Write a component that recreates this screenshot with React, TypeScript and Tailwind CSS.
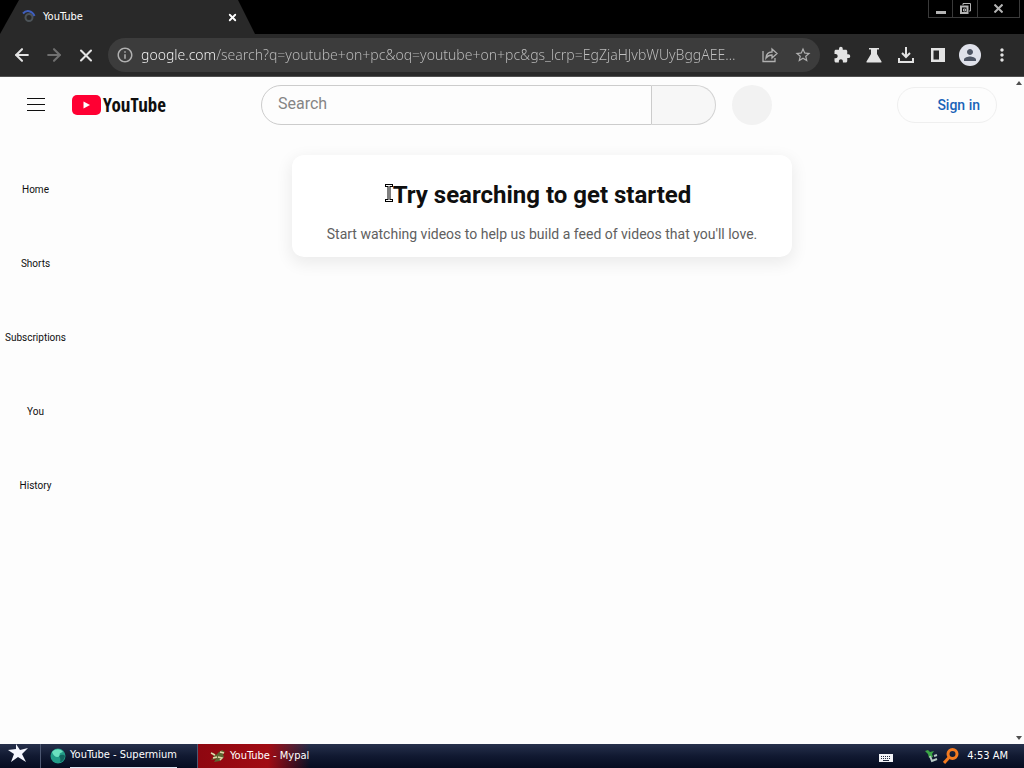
import { useState } from "react";
import { ArrowLeft, ArrowRight, X } from "lucide-react";
import { MdExtension, MdInfoOutline, MdMoreVert, MdPerson, MdStarBorder } from "react-icons/md";

const GUIDE_ITEMS = ["Home", "Shorts", "Subscriptions", "You", "History"];

const START_URL = "google.com/search?q=youtube+on+pc&oq=youtube+on+pc&gs_lcrp=EgZjaHJvbWUyBggAEE…";

function LoadingIcon() {
  return (
    <svg width="14" height="14" viewBox="0 0 14 14" fill="none" strokeWidth="2">
      <circle cx="7" cy="7.5" r="3.5" stroke="#4c5358" />
      <path d="M1 3.500C4 0 10 0 12.500 6" stroke="#3f5fbf" />
    </svg>
  );
}

function WindowControls() {
  return (
    <div className="flex h-[18px] border-b border-l border-[#3a3a3a] text-[#b4b4b4]">
      <button aria-label="Minimize" className="flex w-6 items-center justify-center border-r border-[#3a3a3a]">
        <svg width="10" height="12" viewBox="0 0 10 12"><path d="M0 8h10v3H0z" fill="currentColor" /></svg>
      </button>
      <button aria-label="Restore" className="flex w-[25px] items-center justify-center border-r border-[#3a3a3a]">
        <svg width="11" height="11" viewBox="0 0 11 11" fill="none" stroke="currentColor">
          <path d="M3 2V.5h7.500V8H9" />
          <path d="M1 3.500h6.500V10H1z" strokeWidth="2" />
          <path d="M3.500 6h2v2h-2z" />
        </svg>
      </button>
      <button aria-label="Close window" className="flex w-[42px] items-center justify-center border-r border-[#3a3a3a]">
        <svg width="9" height="9" viewBox="0 0 9 9" fill="none" stroke="currentColor" strokeWidth="2"><path d="M.5.5l8 8M8.500.5l-8 8" /></svg>
      </button>
    </div>
  );
}

function TabStrip() {
  return (
    <div className="flex h-[34px] items-start justify-between bg-black pr-1">
      <div className="flex h-full w-64 items-center bg-[#292929] pr-4 pl-[22px] text-white [clip-path:polygon(19px_0,238px_0,255px_100%,0_100%)]">
        <LoadingIcon />
        <span className="ml-[7px] flex-1 font-['DejaVu_Sans_Condensed','DejaVu_Sans',sans-serif] text-[11px]">YouTube</span>
        <button aria-label="Close tab" className="flex h-4 w-4 items-center justify-center">
          <X size={11} strokeWidth={4} />
        </button>
      </div>
      <WindowControls />
    </div>
  );
}

function Toolbar() {
  const [url, setUrl] = useState(START_URL);

  return (
    <div className="flex h-[43px] items-center border-b border-[#505050] bg-[#292929] pr-3 text-[#e3e3e3]">
      <button aria-label="Back" className="ml-3 flex h-5 w-5 items-center justify-center"><ArrowLeft size={20} strokeWidth={2.5} /></button>
      <button aria-label="Forward" className="ml-3 flex h-5 w-5 items-center justify-center text-[#6f6f6f]"><ArrowRight size={20} strokeWidth={2.5} /></button>
      <button aria-label="Stop" className="ml-3 flex h-5 w-5 items-center justify-center"><X size={21} strokeWidth={2.5} /></button>
      <div className="ml-3 flex h-[34px] flex-1 items-center rounded-full bg-[#3c3c3c] px-2 text-[#b0b0b0]">
        <button aria-label="Site information" className="flex h-[18px] w-[18px] items-center justify-center"><MdInfoOutline size={18} /></button>
        <input
          aria-label="Address"
          value={url}
          onChange={(e) => setUrl(e.target.value)}
          className="ml-[7px] min-w-0 flex-1 bg-[linear-gradient(90deg,#ffffff_75px,#c0c0c0_75px)] bg-clip-text font-['Noto_Sans',sans-serif] text-sm font-light text-transparent outline-none"
        />
        <button aria-label="Share" className="flex h-4 w-4 items-center justify-center">
          <svg width="16" height="16" viewBox="0 0 16 16" fill="none" stroke="currentColor" strokeWidth="1.3">
            <path d="M1 4v10.500h12V11" />
            <path d="M4 11c.3-4 2.500-6 6-6V2l5 4.500-5 4.500V8C7.500 8 5.500 9 4 11z" />
          </svg>
        </button>
        <button aria-label="Bookmark" className="ml-4 flex h-[18px] w-[18px] items-center justify-center"><MdStarBorder size={18} /></button>
      </div>
      <button aria-label="Extensions" className="ml-3 flex h-5 w-5 items-center justify-center"><MdExtension size={18} /></button>
      <button aria-label="Labs" className="ml-3 flex h-5 w-5 items-center justify-center">
        <svg width="16" height="16" viewBox="0 0 16 16" fill="currentColor"><path d="M3 1h10v1.500h-2V7l4.500 7.500Q16 15.500 15 15.500H1Q0 15.500.5 14.500L5 7V2.500H3z" /></svg>
      </button>
      <button aria-label="Downloads" className="ml-3 flex h-5 w-5 items-center justify-center">
        <svg width="18" height="18" viewBox="0 0 18 18" fill="none" stroke="currentColor" strokeWidth="2">
          <path d="M9 1v9M5 7l4 4 4-4M2 12v4h14v-4" />
        </svg>
      </button>
      <button aria-label="Side panel" className="ml-3 flex h-5 w-5 items-center justify-center">
        <svg width="14" height="14" viewBox="0 0 14 14" fill="currentColor"><path fillRule="evenodd" d="M0 0h14v14H0zM2.500 2.500v9H8v-9z" /></svg>
      </button>
      <button aria-label="Profile" className="ml-[11px] flex h-[22px] w-[22px] items-center justify-center rounded-full bg-[#dfe1ea] text-[#4d5463]"><MdPerson size={18} /></button>
      <button aria-label="Browser menu" className="ml-[11px] flex h-5 w-5 items-center justify-center"><MdMoreVert size={20} /></button>
    </div>
  );
}

function Masthead() {
  const [query, setQuery] = useState("");

  return (
    <header className="flex h-14 items-center px-4">
      <div className="flex w-[245px] shrink-0 items-center">
        <button aria-label="Guide" className="flex h-10 w-10 items-center justify-center">
          <svg width="18" height="14" viewBox="0 0 18 14" stroke="#0f0f0f"><path d="M0 .5h18M0 6.500h18M0 12.500h18" /></svg>
        </button>
        <a href="#home" className="ml-4 flex items-center gap-0.5">
          <svg width="29" height="20" viewBox="0 0 29 20">
            <rect width="29" height="20" rx="5" fill="#ff0033" />
            <path d="M11.500 6.500v7l6.500-3.500z" fill="#fff" />
          </svg>
          <span className="font-['Open_Sans_Condensed','Noto_Sans_Condensed','Roboto_Condensed',Roboto,sans-serif] text-[19px] leading-6 font-bold text-[#0f0f0f]">YouTube</span>
        </a>
      </div>
      <form className="flex flex-1 items-center" onSubmit={(e) => e.preventDefault()}>
        <input
          aria-label="Search"
          placeholder="Search"
          value={query}
          onChange={(e) => setQuery(e.target.value)}
          className="h-10 min-w-0 flex-1 rounded-l-full border border-[#ccc] bg-[#fdfdfd] pr-1 pb-1 pl-4 text-base outline-none placeholder:text-[#858585]"
        />
        <button aria-label="Submit search" className="h-10 w-16 rounded-r-full border border-l-0 border-[#d3d3d3] bg-[#f7f7f7]" />
        <button type="button" aria-label="Search with your voice" className="ml-4 h-10 w-10 rounded-full bg-[#f2f2f2]" />
      </form>
      <div className="flex w-[225px] shrink-0 justify-end">
        <a href="#signin" className="flex h-9 w-[100px] items-center justify-end rounded-full border border-[#efefef] pr-4 text-sm font-medium text-[#1a63b8]">Sign in</a>
      </div>
    </header>
  );
}

function MiniGuide() {
  return (
    <nav className="w-[71px] shrink-0 pt-1">
      {GUIDE_ITEMS.map((item) => (
        <a key={item} href={`#${item.toLowerCase()}`} className="flex h-[74px] items-end justify-center pb-[14px] text-[10px] leading-[14px] text-[#0f0f0f]">
          {item}
        </a>
      ))}
    </nav>
  );
}

function TextCursor() {
  return (
    <svg width="9" height="18" viewBox="0 0 9 18" className="absolute top-[29px] left-[93px]" fill="none">
      <path d="M0 1.500h8M4 1.500v15M0 16.500h8" stroke="#000" strokeWidth="3" />
      <path d="M1 1.500h6M4 1.500v15M1 16.500h6" stroke="#fff" strokeWidth="1" />
    </svg>
  );
}

function Taskbar() {
  return (
    <footer className="flex h-6 items-stretch bg-linear-to-b from-[#27314c] via-[#111931] to-[#060c20] font-['DejaVu_Sans_Condensed','DejaVu_Sans',sans-serif] text-[11px] text-white">
      <button aria-label="Start" className="flex w-10 items-start justify-center pr-1">
        <svg width="22" height="20" viewBox="0 0 22 20"><path d="M9 0l4 6 8-2-6 6 4 8-8-5-7 5 3-8-6-4 8-1z" fill="#f5f7ff" /></svg>
      </button>
      <button className="flex w-[158px] items-center border-r border-l border-[#4d5872] pl-[9px] text-left">
        <svg width="16" height="16" viewBox="0 0 16 16" className="mr-1">
          <circle cx="8" cy="8" r="7.500" fill="#239c88" />
          <path d="M2 4c4-4 9-3 11 0-3 1-4 1-3 4-3 2-6 1-8-4z" fill="#6be0bf" />
          <path d="M9 8c3-2 5-1 6 0-1 4-3 6-5 6 1-3 0-4-1-6z" fill="#12655f" />
        </svg>
        <span className="flex h-full items-center border-b border-[#dce5f3]">YouTube - Supermium</span>
      </button>
      <button className="flex w-[140px] items-center bg-linear-to-r from-[#8e0710] via-[#a10b13] via-50% to-transparent to-80% pl-3 text-left">
        <svg width="16" height="14" viewBox="0 0 16 14" className="mr-1">
          <path d="M1 3l5 3 3-3 3-2 3 2-2 2 1 3-4 4-6 1 2-3-5 1 3-3z" fill="#5c6632" />
          <path d="M1 4l4 2M10 3l4 1M8 8l4 1-2 2M3 9l4-1" fill="none" stroke="#e4d7aa" strokeWidth="1.500" />
        </svg>
        YouTube - Mypal
      </button>
      <div className="ml-auto flex items-center pr-4">
        <svg width="14" height="8" viewBox="0 0 14 8" className="mt-1 mr-8">
          <path d="M0 0h14v8H0z" fill="#f3f4f8" />
          <path d="M2 2.500h10M2 4.500h10" stroke="#222a3e" strokeDasharray="1 1" />
          <path d="M4 6.500h6" stroke="#222a3e" />
        </svg>
        <svg width="14" height="14" viewBox="0 0 14 14" className="mr-1">
          <path d="M0 2l3-1 2 2 4-1-2 3 1 3-4 1-1-4z" fill="#3ca646" />
          <path d="M5 7l2 5 5-2M9 7l3-1" fill="none" stroke="#b8c9c4" strokeWidth="2" />
        </svg>
        <svg width="16" height="16" viewBox="0 0 16 16" className="mr-2" fill="none" stroke="#f47b20">
          <circle cx="9.500" cy="6" r="4.500" strokeWidth="3" />
          <path d="M6 9.500L1 15" strokeWidth="3" />
        </svg>
        <span>4:53 AM</span>
      </div>
    </footer>
  );
}

export default function App() {
  return (
    <div className="flex min-h-screen flex-col bg-[#fdfdfd] font-[Roboto,sans-serif]">
      <TabStrip />
      <Toolbar />
      <div className="flex flex-1">
        <div className="flex flex-1 flex-col">
          <Masthead />
          <div className="flex flex-1">
            <MiniGuide />
            <main className="flex flex-1 items-start justify-center px-6 pt-[22px]">
              <section className="relative w-full max-w-[500px] rounded-xl bg-white px-6 pt-6 pb-3 text-center shadow-[0_5px_16px_2px_rgba(0,0,0,0.07)]">
                <h1 className="text-2xl leading-8 font-bold text-[#0f0f0f]">Try searching to get started</h1>
                <p className="mt-3 text-sm leading-[22px] text-[#606060]">Start watching videos to help us build a feed of videos that you'll love.</p>
                <TextCursor />
              </section>
            </main>
          </div>
        </div>
        <div className="flex w-[11px] shrink-0 flex-col items-center justify-between py-1">
          <svg width="6" height="4" viewBox="0 0 6 4"><path d="M0 4l3-4 3 4z" fill="#505050" /></svg>
          <svg width="6" height="4" viewBox="0 0 6 4"><path d="M0 0l3 4 3-4z" fill="#505050" /></svg>
        </div>
      </div>
      <Taskbar />
    </div>
  );
}
